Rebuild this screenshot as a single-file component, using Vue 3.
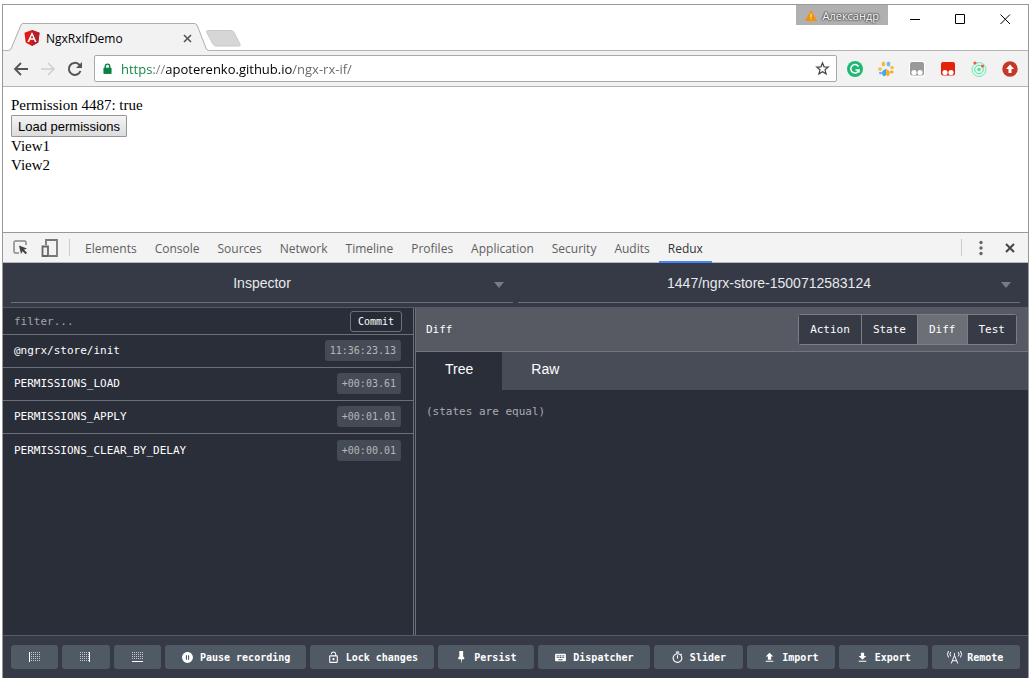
<script setup>
import { ref } from 'vue'

const url = ref('https://apoterenko.github.io/ngx-rx-if/')
const filter = ref('')
const panels = ['Elements', 'Console', 'Sources', 'Network', 'Timeline', 'Profiles', 'Application', 'Security', 'Audits', 'Redux']
const panel = ref('Redux')
const actions = [
  { type: '@ngrx/store/init', time: '11:36:23.13' },
  { type: 'PERMISSIONS_LOAD', time: '+00:03.61' },
  { type: 'PERMISSIONS_APPLY', time: '+00:01.01' },
  { type: 'PERMISSIONS_CLEAR_BY_DELAY', time: '+00:00.01' }
]
const modes = ['Action', 'State', 'Diff', 'Test']
const mode = ref('Diff')
const views = ['Tree', 'Raw']
const view = ref('Tree')

const layouts = [
  { name: 'left', dots: 'M2 .5h9M2 2.5h9M2 4.5h9M2 6.5h9M2 8.5h9', bar: 'M.5 0v10' },
  { name: 'right', dots: 'M0 .5h9M0 2.5h9M0 4.5h9M0 6.5h9M0 8.5h9', bar: 'M9.5 0v10' },
  { name: 'bottom', dots: 'M0 .5h11M0 2.5h11M0 4.5h11M0 6.5h11', bar: 'M0 9.5h11' }
]
const tools = [
  { label: 'Pause recording', size: 'w-pause', d: 'M12 2C6.48 2 2 6.48 2 12s4.48 10 10 10 10-4.48 10-10S17.52 2 12 2zm-1 14H9V8h2v8zm4 0h-2V8h2v8z' },
  { label: 'Lock changes', size: 'w-lock', d: 'M12 17c1.1 0 2-.9 2-2s-.9-2-2-2-2 .9-2 2 .9 2 2 2zm6-9h-1V6c0-2.76-2.24-5-5-5S7 3.24 7 6h1.9c0-1.71 1.39-3.1 3.1-3.1 1.71 0 3.1 1.39 3.1 3.1v2H6c-1.1 0-2 .9-2 2v10c0 1.1.9 2 2 2h12c1.1 0 2-.9 2-2V10c0-1.1-.9-2-2-2zm0 12H6V10h12v10z' },
  { label: 'Persist', size: 'w-persist', d: 'M8 0h7v10l2 2v3h-4l-1 8-1-8H6v-3l2-2z' },
  { label: 'Dispatcher', size: 'w-dispatch', d: 'M20 5H4c-1.1 0-1.99.9-1.99 2L2 17c0 1.1.9 2 2 2h16c1.1 0 2-.9 2-2V7c0-1.1-.9-2-2-2zm-9 3h2v2h-2V8zm0 3h2v2h-2v-2zM8 8h2v2H8V8zm0 3h2v2H8v-2zm-1 2H5v-2h2v2zm0-3H5V8h2v2zm9 7H8v-2h8v2zm0-4h-2v-2h2v2zm0-3h-2V8h2v2zm3 3h-2v-2h2v2zm0-3h-2V8h2v2z' },
  { label: 'Slider', size: 'w-small', d: 'M15 1H9v2h6V1zm-4 13h2V8h-2v6zm8.03-6.61l1.42-1.42c-.43-.51-.9-.99-1.41-1.41l-1.42 1.42C16.07 4.74 14.12 4 12 4c-4.97 0-9 4.03-9 9s4.02 9 9 9 9-4.03 9-9c0-2.12-.74-4.07-1.97-5.61zM12 20c-3.87 0-7-3.13-7-7s3.13-7 7-7 7 3.13 7 7-3.13 7-7 7z' },
  { label: 'Import', size: 'w-small', d: 'M9 16h6v-6h4l-7-7-7 7h4zm-4 2h14v2H5z' },
  { label: 'Export', size: 'w-small', d: 'M19 9h-4V3H9v6H5l7 7 7-7zM5 18v2h14v-2H5z' },
  { label: 'Remote', size: 'w-small', wave: 'M12 8L6 23M12 8l6 15M8 18h8M12 4v4M5 2q-3 4 0 8M19 2q3 4 0 8M1 0q-4 6 0 12M23 0q4 6 0 12' }
]
</script>

<template>
  <div class="window">
    <header class="titlebar">
      <div class="tab">
        <svg class="tab-shape" viewBox="0 0 200 28" preserveAspectRatio="none" aria-hidden="true">
          <path d="M0 27.500L2 26 12 2Q12.500.5 14 .5H185Q187 .5 188 2L197 25Q198 27.500 200 27.500V28H0z" fill="#f2f2f2" />
          <path d="M0 27.500L2 26 12 2Q12.500.5 14 .5H185Q187 .5 188 2L197 25Q198 27.500 200 27.500" fill="none" stroke="#adadad" />
        </svg>
        <svg class="angular" viewBox="0 0 16 16" aria-hidden="true">
          <path d="M8 0l7.500 2.700-1.200 9.800L8 16l-6.300-3.500L.5 2.700z" fill="#dd1b16" />
          <path d="M8 0v16l6.300-3.500 1.200-9.800z" fill="#b3202a" />
          <path d="M8 2l-4.600 10h1.800l.9-2.300h3.800l.9 2.300h1.800zm0 3.200l1.300 3H6.700z" fill="#fff" />
        </svg>
        <span class="tab-title">NgxRxIfDemo</span>
        <button class="tab-close" aria-label="Close tab">
          <svg viewBox="0 0 9 9"><path d="M1 1l7 7M8 1L1 8" stroke="#555" stroke-width="1.600" /></svg>
        </button>
      </div>
      <button class="new-tab" aria-label="New tab">
        <svg viewBox="0 0 36 18"><path d="M2 .5H25Q27 .5 28 2.500L34 14Q35 16 32.500 16H10Q8 16 7 14L.8 2.500Q0 .5 2 .5z" fill="#d6d6d6" stroke="#c8c8c8" /></svg>
      </button>
      <div class="controls">
        <button class="profile">
          <svg viewBox="0 0 12 11" aria-hidden="true"><path d="M6 0l6 11H0z" fill="#f39200" /><path d="M6 3.500v4M6 8.500v1" stroke="#fff3d8" /></svg>
          Александр
        </button>
        <button class="control" aria-label="Minimize"><svg viewBox="0 0 11 11"><path d="M0 5.500h10" stroke="#000" /></svg></button>
        <button class="control" aria-label="Maximize"><svg viewBox="0 0 11 11"><path d="M.5.5h9v9h-9z" fill="none" stroke="#000" /></svg></button>
        <button class="control" aria-label="Close"><svg viewBox="0 0 11 11"><path d="M.5.5l9.500 9.500M10 .5L.5 10" stroke="#000" /></svg></button>
      </div>
    </header>

    <nav class="toolbar">
      <button class="nav" aria-label="Back"><svg viewBox="0 0 16 16"><path d="M15 8H2M8 2L2 8l6 6" fill="none" stroke="#555" stroke-width="1.800" /></svg></button>
      <button class="nav" aria-label="Forward"><svg viewBox="0 0 16 16"><path d="M1 8h13M8 2l6 6-6 6" fill="none" stroke="#d0d0d0" stroke-width="1.600" /></svg></button>
      <button class="nav" aria-label="Reload"><svg viewBox="0 0 16 16"><path d="M13.500 10A6 6 0 1 1 12 3.500L13.500 5" fill="none" stroke="#555" stroke-width="2" /><path d="M15 1v6H9z" fill="#555" /></svg></button>
      <div class="address">
        <svg class="padlock" viewBox="0 0 10 12" aria-hidden="true"><path d="M1 5h8v6H1z" fill="#0b8043" stroke="#0b8043" /><path d="M2.500 5V3a2.500 2.500 0 0 1 5 0v2" fill="none" stroke="#0b8043" stroke-width="1.500" /></svg>
        <input v-model="url" class="url" type="text" aria-label="Address" spellcheck="false" />
        <button class="star" aria-label="Bookmark"><svg viewBox="0 0 14 14"><path d="M7 1l1.700 4.200 4.500.3-3.500 2.900 1.200 4.400L7 10.400l-3.900 2.400 1.200-4.400L.8 5.500l4.500-.3z" fill="none" stroke="#444" stroke-width="1.300" /></svg></button>
      </div>
      <div class="extensions">
        <button aria-label="Grammar checker"><svg viewBox="0 0 16 16"><circle cx="8" cy="8" r="8" fill="#1fb874" /><path d="M11.500 5.500A4.200 4.200 0 1 0 12 9H8.500M12 9v2.500" fill="none" stroke="#fff" stroke-width="1.500" /></svg></button>
        <button aria-label="Paw"><svg viewBox="0 0 16 16"><path d="M8 8Q4 9 4 12t2 3.500L8 14z" fill="#44a7e8" /><path d="M8 8Q12 9 12 12t-2 3.500L8 14z" fill="#f6ae35" /><ellipse cx="5.500" cy="3" rx="1.900" ry="2.600" fill="#fbbb38" /><ellipse cx="10.500" cy="3" rx="1.900" ry="2.600" fill="#6ebbf0" /><ellipse cx="2" cy="8" rx="2" ry="1.700" fill="#f7bd59" /><ellipse cx="14" cy="6.500" rx="2" ry="1.600" fill="#fbbb38" /><ellipse cx="13.800" cy="11" rx="1.800" ry="1.400" fill="#f6a62e" /><ellipse cx="2.500" cy="12" rx="1.500" ry="1.200" fill="#63b5ee" /></svg></button>
        <button aria-label="Scripts"><svg viewBox="0 0 16 16"><rect width="16" height="16" rx="2" fill="#fff" /><rect x="1" y="1" width="14" height="13.500" rx="2" fill="#999" /><circle cx="5" cy="11.500" r="2.600" fill="#fff" /><circle cx="11" cy="11.500" r="2.600" fill="#fff" /></svg></button>
        <button aria-label="Scripts beta"><svg viewBox="0 0 16 16"><rect x="1" y="1" width="14" height="13.500" rx="2" fill="#e5230a" /><circle cx="5" cy="11.500" r="2.600" fill="#fff" /><circle cx="11" cy="11.500" r="2.600" fill="#fff" /></svg></button>
        <button aria-label="Radar"><svg viewBox="0 0 16 16"><circle cx="8" cy="8.500" r="7" fill="#e2faee" stroke="#76e7b4" /><circle cx="8" cy="8.500" r="4.300" fill="none" stroke="#5edca3" /><circle cx="8" cy="8.500" r="1.800" fill="#62dda6" /><circle cx="4" cy="2" r="1.600" fill="#ee5b3a" /><circle cx="11.500" cy="5" r="1.600" fill="#ee5b3a" /></svg></button>
        <button aria-label="Upload"><svg viewBox="0 0 16 16"><circle cx="8" cy="8" r="7.700" fill="#c53727" /><path d="M8 3.500l4 4.500H9.500v4h-3V8H4z" fill="#fff" /></svg></button>
      </div>
    </nav>

    <main class="page">
      <div>Permission 4487: true</div>
      <button class="load">Load permissions</button>
      <div>View1</div>
      <div>View2</div>
    </main>

    <section class="devtools">
      <div class="devbar">
        <button class="dev-icon" aria-label="Inspect element"><svg viewBox="0 0 16 16"><path d="M6 13H2.500Q1 13 1 11.500v-9Q1 1 2.500 1h9Q13 1 13 2.500V5" fill="none" stroke="#888" stroke-width="1.500" /><path d="M6 5.500l8 3-3 1.300 3 3-1.400 1.400-3-3L8 14z" fill="#444" /></svg></button>
        <button class="dev-icon device" aria-label="Toggle device mode"><svg viewBox="0 0 18 18"><path d="M5 6V1h11v16H8" fill="none" stroke="#777" stroke-width="1.800" /><path d="M1.500 7.500h5.500V17H1.500z" fill="#eee" stroke="#666" stroke-width="1.800" /></svg></button>
        <span class="rule"></span>
        <div class="panels">
          <button v-for="name in panels" :key="name" :class="{ active: panel === name }" @click="panel = name">{{ name }}</button>
        </div>
        <span class="rule"></span>
        <button class="more" aria-label="More"><svg viewBox="0 0 4 16"><g fill="#666"><circle cx="2" cy="2.500" r="1.700" /><circle cx="2" cy="8" r="1.700" /><circle cx="2" cy="13.500" r="1.700" /></g></svg></button>
        <button class="dismiss" aria-label="Close developer tools"><svg viewBox="0 0 10 10"><path d="M1 1l8 8M9 1L1 9" stroke="#444" stroke-width="2" /></svg></button>
      </div>

      <div class="selectors">
        <div class="pick">
          <select aria-label="Monitor"><option>Inspector</option></select>
          <svg viewBox="0 0 10 6" aria-hidden="true"><path d="M0 0h10L5 6z" fill="#787c86" /></svg>
        </div>
        <div class="pick">
          <select aria-label="Instance"><option>1447/ngrx-store-1500712583124</option></select>
          <svg viewBox="0 0 10 6" aria-hidden="true"><path d="M0 0h10L5 6z" fill="#787c86" /></svg>
        </div>
      </div>

      <div class="inspector">
        <div class="history">
          <div class="filter-row">
            <input v-model="filter" type="text" placeholder="filter..." aria-label="Filter actions" />
            <button>Commit</button>
          </div>
          <ul>
            <li v-for="action in actions" :key="action.type">
              <span>{{ action.type }}</span>
              <time>{{ action.time }}</time>
            </li>
          </ul>
        </div>
        <div class="detail">
          <div class="detail-head">
            <span>{{ mode }}</span>
            <div class="modes">
              <button v-for="name in modes" :key="name" :class="{ active: mode === name }" @click="mode = name">{{ name }}</button>
            </div>
          </div>
          <div class="views">
            <button v-for="name in views" :key="name" :class="{ active: view === name }" @click="view = name">{{ name }}</button>
          </div>
          <p>(states are equal)</p>
        </div>
      </div>

      <footer class="tools">
        <button v-for="item in layouts" :key="item.name" class="w-layout" :aria-label="'Dock ' + item.name">
          <svg class="dock" viewBox="0 0 11 10"><path :d="item.dots" stroke="#c4c9cd" stroke-dasharray="1 1" /><path :d="item.bar" stroke="#fff" /></svg>
        </button>
        <button v-for="tool in tools" :key="tool.label" :class="tool.size">
          <svg class="glyph" viewBox="0 0 24 24" aria-hidden="true">
            <path v-if="tool.d" :d="tool.d" fill="#fff" />
            <path v-else :d="tool.wave" fill="none" stroke="#fff" stroke-width="1.800" />
          </svg>
          {{ tool.label }}
        </button>
      </footer>
    </section>
  </div>
</template>

<style>
body {
  background: #fff;
}
</style>

<style scoped>
* {
  box-sizing: border-box;
}
button,
input,
select {
  margin: 0;
  padding: 0;
  border: 0;
  background: none;
  font: inherit;
  color: inherit;
  outline: none;
}
svg {
  display: block;
  flex: none;
  overflow: visible;
}
.window {
  display: flex;
  flex-direction: column;
  min-height: calc(100vh - 7px);
  margin: 4px 3px 0 2px;
  border: 1px solid #999;
  border-bottom: 0;
  font-family: "Open Sans", "Noto Sans", sans-serif;
  font-size: 12px;
}
.titlebar {
  display: flex;
  align-items: flex-end;
  height: 46px;
  border-bottom: 1px solid #b4b4b4;
}
.tab {
  position: relative;
  display: flex;
  align-items: center;
  width: 200px;
  height: 28px;
  margin: 0 0 -1px 6px;
  padding: 2px 17px 0 15px;
}
.tab-shape {
  position: absolute;
  inset: 0;
  width: 100%;
  height: 100%;
}
.angular {
  position: relative;
  width: 16px;
  height: 16px;
  margin-right: 6px;
}
.tab-title {
  position: relative;
  flex: 1;
}
.tab-close {
  position: relative;
}
.tab-close svg {
  width: 9px;
  height: 9px;
}
.new-tab {
  margin: 0 0 2px -3px;
}
.new-tab svg {
  width: 36px;
  height: 18px;
}
.controls {
  display: flex;
  align-self: flex-start;
  margin-left: auto;
}
.profile {
  display: flex;
  align-items: center;
  gap: 5px;
  height: 20px;
  margin-right: 5px;
  padding: 0 9px;
  background: #b0b0b0;
  color: #fff;
  font-size: 11px;
  text-shadow: 0 0 2px #222, 0 0 2px #222;
}
.profile svg {
  width: 12px;
  height: 11px;
}
.control {
  display: flex;
  align-items: center;
  justify-content: center;
  width: 45px;
  height: 28px;
}
.control svg {
  width: 11px;
  height: 11px;
}
.toolbar {
  display: flex;
  align-items: center;
  height: 36px;
  padding: 0 10px;
  background: #f2f2f2;
  border-bottom: 1px solid #b4b4b4;
}
.nav {
  margin-right: 11px;
}
.nav svg {
  width: 16px;
  height: 16px;
}
.address {
  display: flex;
  flex: 1;
  align-items: center;
  height: 27px;
  padding: 0 7px 0 8px;
  border: 1px solid #a9a9a9;
  border-radius: 2px;
  background: #fff;
}
.padlock {
  width: 9px;
  height: 12px;
  margin-right: 9px;
}
.url {
  flex: 1;
  min-width: 0;
  font-size: 13px;
  color: transparent;
  caret-color: #000;
  background: linear-gradient(90deg, #0b8043 33px, #808080 33px, #808080 45px, #000 45px, #000 171px, #666 171px);
  -webkit-background-clip: text;
  background-clip: text;
}
.star svg {
  width: 13px;
  height: 13px;
}
.extensions {
  display: flex;
  gap: 15px;
  margin-left: 10px;
}
.extensions svg {
  width: 16px;
  height: 16px;
}
.page {
  height: 145px;
  padding: 9px 8px;
  background: #fff;
  color: #000;
  font-family: "Liberation Serif", serif;
  font-size: 15px;
  line-height: 19px;
}
.load {
  display: block;
  height: 22px;
  padding: 0 6px;
  border: 1px solid #969696;
  border-radius: 1px;
  background: linear-gradient(#f4f4f4, #dcdcdc);
  font: 13px/19px "Liberation Sans", sans-serif;
}
.devtools {
  display: flex;
  flex: 1;
  flex-direction: column;
  border-top: 1px solid #999;
  background: #2a2e39;
  color: #fff;
  font-family: "DejaVu Sans Mono", monospace;
  font-size: 11px;
}
.devbar {
  display: flex;
  align-items: center;
  height: 30px;
  padding: 0 13px 0 10px;
  background: #f3f3f3;
  border-bottom: 1px solid #b5b9bd;
  color: #5f5f5f;
  font-family: "Open Sans", "Noto Sans", sans-serif;
  font-size: 12px;
}
.dev-icon svg {
  width: 16px;
  height: 16px;
}
.device {
  margin: 0 10px 0 12px;
}
.device svg {
  width: 18px;
  height: 18px;
}
.rule {
  width: 1px;
  height: 17px;
  background: #ccc;
}
.panels {
  display: flex;
  flex: 1;
  align-self: stretch;
  margin: 0 0 -1px 6px;
}
.panels button {
  padding: 2px 9px 0;
  border-bottom: 2px solid transparent;
}
.panels .active {
  border-color: #4285f4;
  color: #333;
}
.more {
  margin: 0 22px 0 17px;
}
.more svg {
  width: 4px;
  height: 16px;
}
.dismiss svg {
  width: 10px;
  height: 10px;
}
.selectors {
  display: flex;
  gap: 5px;
  height: 45px;
  padding: 0 8px 4px;
  background: #353a46;
  border-bottom: 1px solid #4f5a65;
}
.pick {
  position: relative;
  flex: 1;
  border-bottom: 1px solid #6b6f7a;
}
.pick select {
  width: 100%;
  height: 100%;
  appearance: none;
  color: #e8e9ec;
  font: 14px "Liberation Sans", sans-serif;
  text-align-last: center;
}
.pick svg {
  position: absolute;
  right: 9px;
  top: 19px;
  width: 10px;
  height: 6px;
  pointer-events: none;
}
.inspector {
  display: flex;
  flex: 1;
}
.history {
  width: calc(40% + 1px);
  margin-right: 1px;
  border-right: 1px solid #6b6f7a;
}
.filter-row {
  display: flex;
  align-items: center;
  height: 27px;
  padding: 0 11px;
  border-bottom: 1px solid #6b6f7a;
}
.filter-row input {
  flex: 1;
  min-width: 0;
}
.filter-row input::placeholder {
  color: #a2a4aa;
  opacity: 1;
}
.filter-row button {
  height: 21px;
  padding: 0 7px;
  border: 1px solid #6b6f7a;
  border-radius: 3px;
  background: #262c36;
  font-size: 10px;
}
ul {
  margin: 0;
  padding: 0;
  list-style: none;
}
li {
  display: flex;
  align-items: center;
  justify-content: space-between;
  height: 33px;
  padding: 0 12px 1px 11px;
}
li:not(:last-child) {
  border-bottom: 1px solid #6b6f7a;
}
time {
  padding: 0 5px;
  border-radius: 3px;
  background: #454b55;
  color: #b4b6ba;
  font-size: 10px;
  line-height: 21px;
}
.detail {
  flex: 1;
  border-left: 1px solid #6b6f7a;
}
.detail-head {
  display: flex;
  align-items: center;
  justify-content: space-between;
  height: 44px;
  padding: 0 11px 0 10px;
  background: #575a63;
  border-bottom: 1px solid #72757e;
}
.modes {
  display: flex;
  border: 1px solid #7b7e87;
  border-radius: 3px;
}
.modes button {
  height: 29px;
  padding: 0 11px;
  background: #363b46;
}
.modes button + button {
  border-left: 1px solid #7b7e87;
}
.modes .active {
  background: #6d6f76;
}
.views {
  display: flex;
  height: 38px;
  background: #484c56;
  font: 14px "Liberation Sans", sans-serif;
}
.views button {
  padding: 0 29px 4px;
}
.views .active {
  background: #2a2e39;
}
p {
  margin: 0;
  padding: 15px 10px;
  color: #a9abb0;
}
.tools {
  display: flex;
  gap: 4px;
  padding: 9px 8px;
  background: #353a46;
  border-top: 1px solid #575b65;
  font-size: 10px;
  font-weight: bold;
}
.tools button {
  display: flex;
  flex-basis: 0;
  align-items: center;
  justify-content: center;
  gap: 6px;
  min-width: 0;
  height: 24px;
  border-radius: 3px;
  background: #505a65;
  white-space: nowrap;
}
.tools .w-layout {
  flex-grow: 47;
}
.tools .w-pause {
  flex-grow: 141;
}
.tools .w-lock {
  flex-grow: 123;
}
.tools .w-persist {
  flex-grow: 95;
}
.tools .w-dispatch {
  flex-grow: 112;
}
.tools .w-small {
  flex-grow: 88;
}
.glyph {
  width: 13px;
  height: 13px;
}
.dock {
  width: 11px;
  height: 10px;
}
</style>
